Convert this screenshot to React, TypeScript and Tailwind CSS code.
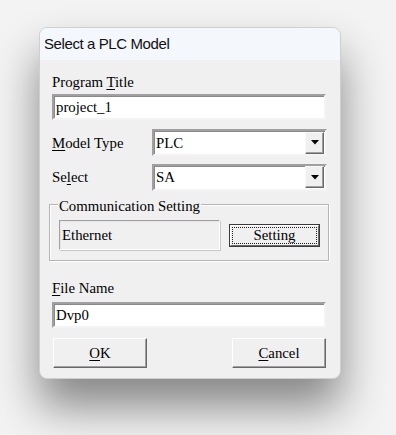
import React from "react";

function Sunken({ children, className = "" }: { children?: React.ReactNode; className?: string }) {
  return (
    <div
      className={
        "flex items-center bg-white border-2 border-t-[#a0a0a0] border-l-[#a0a0a0] border-r-[#f4f4f4] border-b-[#f4f4f4] shadow-[inset_1px_1px_0_#8a8a8a] pl-[2px] " +
        className
      }
    >
      {children}
    </div>
  );
}

function Combo({ value }: { value: string }) {
  return (
    <div className="flex items-center bg-white border-2 border-t-[#a0a0a0] border-l-[#a0a0a0] border-r-[#f4f4f4] border-b-[#f4f4f4] shadow-[inset_1px_1px_0_#8a8a8a] w-[175px] h-[27px] pl-[2px] pr-[1px]">
      <span className="flex-1 leading-[18px]">{value}</span>
      <div className="w-[19px] h-[22px] bg-[#f0f0f0] border border-t-[#f8f8f8] border-l-[#f8f8f8] border-r-[#696969] border-b-[#696969] shadow-[inset_-1px_-1px_0_#a0a0a0] flex items-center justify-center">
        <svg width="8" height="5" viewBox="0 0 8 5">
          <path d="M0 0 H8 L4 4.5 Z" fill="#000" />
        </svg>
      </div>
    </div>
  );
}

function Raised({ children, className = "" }: { children?: React.ReactNode; className?: string }) {
  return (
    <div
      className={
        "flex items-center justify-center bg-[#f0f0f0] border border-t-[#ffffff] border-l-[#ffffff] border-r-[#696969] border-b-[#696969] shadow-[inset_-1px_-1px_0_#a0a0a0] " +
        className
      }
    >
      {children}
    </div>
  );
}

export default function App() {
  return (
    <div className="w-[396px] h-[435px] bg-[#f3f3f3] overflow-hidden pl-[39px] pt-[27px]">
      <div className="w-[302px] rounded-[8px] bg-[#f0f0f0] border border-[#cfcfcf] shadow-[0_28px_45px_rgba(0,0,0,0.45)] overflow-hidden">
        <div className="h-[32px] bg-[#f4f7fb] pl-[4px] pt-[6px] text-[15px] leading-[20px] tracking-[-0.4px] text-[#111] font-['Liberation_Sans',Arial,sans-serif]">
          Select a PLC Model
        </div>
        <div className="pl-[12px] pb-[10px] text-[14.8px] text-[#000] font-['Liberation_Serif','DejaVu_Serif',serif]">
          <div className="mt-[13px] h-[18px] leading-[18px]">
            Program <span className="underline underline-offset-2">T</span>itle
          </div>
          <Sunken className="mt-[3px] w-[274px] h-[26px]">
            <span className="leading-[18px]">project_1</span>
          </Sunken>
          <div className="mt-[9px] flex items-center h-[27px]">
            <span className="w-[100px] leading-[18px]">
              <span className="underline underline-offset-2">M</span>odel Type
            </span>
            <Combo value="PLC" />
          </div>
          <div className="mt-[8px] flex items-center h-[26px]">
            <span className="w-[100px] leading-[18px]">
              Se<span className="underline underline-offset-2">l</span>ect
            </span>
            <Combo value="SA" />
          </div>
          <div className="mt-[14px] -ml-[3px] w-[280px] border border-[#b4b4b4] shadow-[inset_1px_1px_0_#fff,1px_1px_0_#fff] pb-[10px]">
            <div className="-mt-[8px] ml-[8px] h-[18px] leading-[18px]">
              <span className="bg-[#f0f0f0] px-[1px]">Communication Setting</span>
            </div>
            <div className="mt-[5px] ml-[9px] flex items-center">
              <div className="w-[161px] h-[30px] flex items-center pl-[2px] border border-t-[#a0a0a0] border-l-[#a0a0a0] border-r-[#ffffff] border-b-[#ffffff] shadow-[1px_1px_0_#c8c8c8,inset_1px_1px_0_#e6e6e6] leading-[18px]">
                Ethernet
              </div>
              <div className="ml-[9px] w-[91px] h-[23px] border border-[#3a3a3a] bg-[#f0f0f0]">
                <div className="w-full h-full border border-t-[#ffffff] border-l-[#ffffff] border-r-[#696969] border-b-[#696969] p-[1px]">
                  <div className="w-full h-full border border-dotted border-[#222] flex items-center justify-center leading-[16px]">
                    Setting
                  </div>
                </div>
              </div>
            </div>
          </div>
          <div className="mt-[18px] h-[18px] leading-[18px]">
            <span className="underline underline-offset-2">F</span>ile Name
          </div>
          <Sunken className="mt-[5px] w-[274px] h-[26px]">
            <span className="leading-[18px]">Dvp0</span>
          </Sunken>
          <div className="mt-[10px] flex w-[274px] justify-between pl-[1px]">
            <Raised className="w-[94px] h-[30px]">
              <span className="leading-[18px]">
                <span className="underline underline-offset-2">O</span>K
              </span>
            </Raised>
            <Raised className="w-[94px] h-[30px]">
              <span className="leading-[18px]">
                <span className="underline underline-offset-2">C</span>ancel
              </span>
            </Raised>
          </div>
        </div>
      </div>
    </div>
  );
}
